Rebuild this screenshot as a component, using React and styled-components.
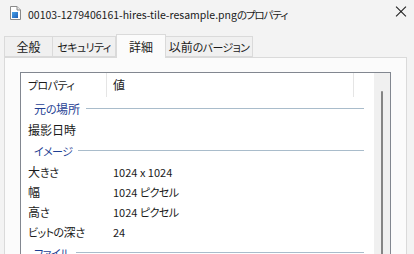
import React from 'react';
import styled, { createGlobalStyle } from 'styled-components';

const GlobalStyle = createGlobalStyle`
  html, body {
    margin: 0;
    padding: 0;
    background: #f3f3f3;
  }
  body {
    font-family: "Noto Sans CJK JP", "Noto Sans", sans-serif;
    font-feature-settings: "palt" 1;
  }
`;

const rows = [
  { type: 'group', label: '元の場所' },
  { type: 'item', label: '撮影日時', value: '' },
  { type: 'group', label: 'イメージ' },
  { type: 'item', label: '大きさ', value: '1024 x 1024' },
  { type: 'item', label: '幅', value: '1024 ピクセル' },
  { type: 'item', label: '高さ', value: '1024 ピクセル' },
  { type: 'item', label: 'ビットの深さ', value: '24' },
  { type: 'group', label: 'ファイル' },
];

const tabs = [
  { label: '全般', width: 49 },
  { label: 'セキュリティ', width: 63 },
  { label: '詳細', width: 50 },
  { label: '以前のバージョン', width: 87 },
];

// splits a label into kana / latin / other runs so each can get its own size
const Text = ({ children }) => {
  const parts = String(children).split(/([\u3040-\u30ff]+|[A-Za-z0-9.\- ]+)/);
  return parts.map((p, i) => {
    if (!p) return null;
    if (/^[\u3040-\u30ff]+$/.test(p)) return <Kana key={i}>{p}</Kana>;
    if (/^[A-Za-z0-9.\- ]+$/.test(p)) return <Latin key={i}>{p}</Latin>;
    return <span key={i}>{p}</span>;
  });
};

const FileIcon = () => (
  <svg width="12" height="14" viewBox="0 0 12 14">
    <defs>
      <linearGradient id="pic" x1="0" y1="0" x2="1" y2="1">
        <stop offset="0" stopColor="#4aa3e8" />
        <stop offset="1" stopColor="#1d5fb8" />
      </linearGradient>
    </defs>
    <path d="M1.5 0.5 H8 L11.5 4 V13.5 H1.5 Z" fill="#fff" stroke="#8a8a8a" />
    <path d="M8 0.5 V4 H11.5" fill="#e8e8e8" stroke="#8a8a8a" />
    <rect x="3" y="6" width="6" height="6" fill="url(#pic)" />
  </svg>
);

const App = () => {
  return (
    <Window>
      <GlobalStyle />
      <TitleBar>
        <FileIcon />
        <TitleText>
          <Text>00103-1279406161-hires-tile-resample.pngのプロパティ</Text>
        </TitleText>
        <CloseButton aria-label="閉じる" />
      </TitleBar>
      <TabStrip>
        {tabs.map((t) => (
          <Tab key={t.label} $active={t.label === '詳細'} $w={t.width}>
            <Text>{t.label}</Text>
          </Tab>
        ))}
      </TabStrip>
      <Panel>
        <ListBox>
          <Table>
            <HeaderRow>
              <div className="name">
                <Text>プロパティ</Text>
              </div>
              <div className="value">値</div>
            </HeaderRow>
            {rows.map((r) =>
              r.type === 'group' ? (
                <GroupRow key={r.label}>
                  <span className="label">
                    <Text>{r.label}</Text>
                  </span>
                  <i />
                </GroupRow>
              ) : (
                <ItemRow key={r.label}>
                  <div className="name">
                    <Text>{r.label}</Text>
                  </div>
                  <div className="value">
                    <Text>{r.value}</Text>
                  </div>
                </ItemRow>
              )
            )}
          </Table>
          <ScrollBar>
            <div className="thumb" />
          </ScrollBar>
        </ListBox>
      </Panel>
    </Window>
  );
};

export default App;

const Window = styled.div`
  width: 414px;
  height: 254px;
  overflow: hidden;
  display: flex;
  flex-direction: column;
  background: #f3f3f3;
  color: #1a1a1a;
  font-size: 12px;
`;

const Latin = styled.span`
  font-size: 11px;
`;

const Kana = styled.span`
  font-size: 11px;
  letter-spacing: -0.6px;
`;

const TitleBar = styled.div`
  height: 26px;
  flex-shrink: 0;
  display: flex;
  align-items: center;
  padding: 0 0 0 9px;
  svg {
    flex-shrink: 0;
  }
`;

const TitleText = styled.span`
  margin-left: 7px;
  color: #1a1a1a;
  white-space: nowrap;
  flex: 1;
  min-width: 0;
  ${Latin} {
    font-size: 10.5px;
  }
  ${Kana} {
    font-size: 10.5px;
    letter-spacing: -1.1px;
  }
`;

const CloseButton = styled.div`
  width: 46px;
  height: 26px;
  flex-shrink: 0;
  position: relative;
  &::before,
  &::after {
    content: '';
    position: absolute;
    left: 26px;
    top: 11px;
    width: 14px;
    height: 1px;
    background: #1a1a1a;
  }
  &::before {
    transform: rotate(45deg);
  }
  &::after {
    transform: rotate(-45deg);
  }
`;

const TabStrip = styled.div`
  display: flex;
  align-items: flex-end;
  height: 31px;
  flex-shrink: 0;
  padding-left: 4px;
  position: relative;
  z-index: 1;
`;

const Tab = styled.div`
  width: ${(p) => p.$w}px;
  height: ${(p) => (p.$active ? '24px' : '21px')};
  margin-bottom: ${(p) => (p.$active ? '-1px' : '0')};
  background: ${(p) => (p.$active ? '#fbfbfb' : '#f0f0f0')};
  border: 1px solid #dadada;
  border-bottom: ${(p) => (p.$active ? 'none' : '1px solid #dadada')};
  border-left: ${(p) => (p.$active ? '1px solid #dadada' : 'none')};
  color: #1a1a1a;
  white-space: nowrap;
  box-sizing: border-box;
  display: flex;
  justify-content: center;
  align-items: ${(p) => (p.$active ? 'flex-start' : 'center')};
  padding-top: ${(p) => (p.$active ? '3px' : '0')};
  &:first-child {
    border-left: 1px solid #dadada;
  }
`;

const Panel = styled.div`
  flex: 1;
  margin: 0 7px 0 4px;
  background: #fbfbfb;
  border: 1px solid #dadada;
  border-bottom: none;
  padding: 14px 15px 0 15px;
  min-height: 0;
`;

const ListBox = styled.div`
  height: 200px;
  background: #ffffff;
  border: 1px solid #828790;
  border-bottom: none;
  display: flex;
`;

const Table = styled.div`
  flex: 1;
  display: flex;
  flex-direction: column;
`;

const HeaderRow = styled.div`
  display: flex;
  height: 24px;
  align-items: center;
  .name {
    width: 78px;
    padding-left: 7px;
    height: 24px;
    line-height: 24px;
    border-right: 1px solid #e5e5e5;
  }
  .value {
    width: 240px;
    padding-left: 6px;
    height: 24px;
    line-height: 24px;
    border-right: 1px solid #e5e5e5;
  }
`;

const GroupRow = styled.div`
  display: flex;
  align-items: center;
  height: 22px;
  padding-left: 13px;
  padding-right: 10px;
  gap: 6px;
  .label {
    color: #1f3f94;
    white-space: nowrap;
  }
  i {
    flex: 1;
    height: 1px;
    background: #a9bccb;
    margin-top: 1px;
  }
`;

const ItemRow = styled.div`
  display: flex;
  align-items: center;
  height: 20px;
  .name {
    width: 78px;
    padding-left: 7px;
    white-space: nowrap;
  }
  .value {
    padding-left: 7px;
    white-space: nowrap;
  }
`;

const ScrollBar = styled.div`
  width: 16px;
  background: #f0f0f0;
  position: relative;
  .thumb {
    position: absolute;
    left: 7px;
    top: 18px;
    width: 2px;
    bottom: 0;
    background: #858585;
    border-radius: 1px;
  }
`;
